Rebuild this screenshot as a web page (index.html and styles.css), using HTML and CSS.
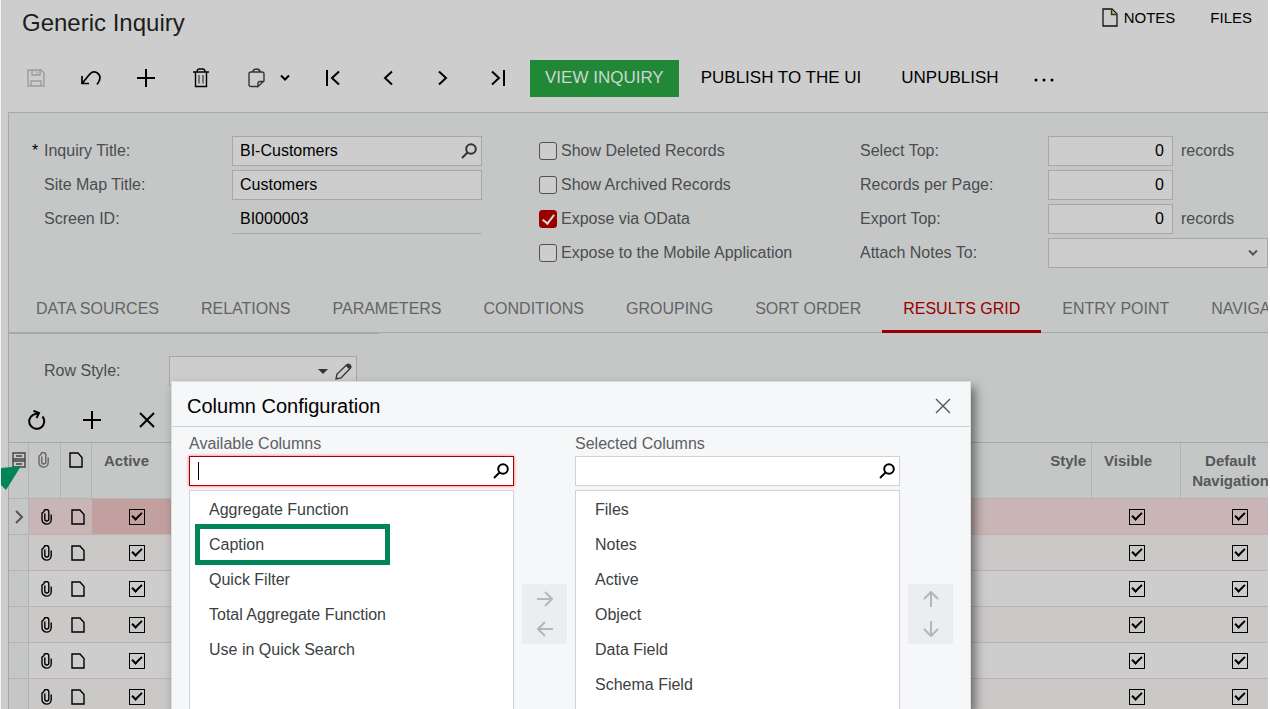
FILE: index.html
```html
<!DOCTYPE html>
<html lang="en">
  <head>
    <meta charset="utf-8" />
    <title>Generic Inquiry</title>
    <link rel="stylesheet" href="styles.css">
  </head>
  <body>
    <svg class="sprite" aria-hidden="true">
      <symbol id="search" viewBox="0 0 16 16"><circle cx="10" cy="6" r="4.8" /><path d="M6.5 9.5L1 15" /></symbol>
      <symbol id="plus" viewBox="0 0 20 20"><path d="M10 1v18M1 10h18" /></symbol>
      <symbol id="cross" viewBox="0 0 16 16"><path d="M1 1l14 14M15 1L1 15" /></symbol>
      <symbol id="down" viewBox="0 0 10 8"><path d="M1 1.5l4 4 4-4" /></symbol>
      <symbol id="arrow" viewBox="0 0 16 16"><path d="M0 8h15M8 1l7 7-7 7" /></symbol>
      <symbol id="clip" viewBox="0 0 12 16"><path d="M3.8 4.5V10a2 2 0 0 0 4 0V3.2a2.5 2.5 0 0 0-5-.5L1 4.200V10.500a4.600 4.600 0 0 0 9.200 0V5.500" /></symbol>
      <symbol id="note" viewBox="0 0 14 16"><path d="M1 1h8l4 4.500V15H1z" /></symbol>
    </svg>

    <header class="page-header">
      <h1>Generic Inquiry</h1>
      <nav class="header-links">
        <a href="#notes">
          <svg class="note-icon" width="16" height="19" viewBox="0 0 16 19"><path d="M1 1h9l5 5v12H1z" fill="none" stroke="#111" stroke-width="1.3" /><path d="M9.500 1.500v5h5" fill="#b9bd5a" stroke="#333" /></svg>
          NOTES
        </a>
        <a href="#files">FILES</a>
      </nav>
    </header>

    <div class="toolbar">
      <button class="icon-btn" aria-label="Save" disabled>
        <svg width="18" height="18" viewBox="0 0 18 18"><path d="M1 1h13l3 3v13H1zM5 1v5h8V1M4 17v-5h10v5M10 2.500v2" /></svg>
      </button>
      <button class="icon-btn" aria-label="Undo">
        <svg width="20" height="16" viewBox="0 0 20 16"><path d="M1 6v7.500h7M1.500 13L8 5Q12.500-.5 17 3.500t-1 11" stroke-width="1.7" /></svg>
      </button>
      <button class="icon-btn" aria-label="Add">
        <svg class="heavy" width="20" height="20"><use href="#plus" /></svg>
      </button>
      <button class="icon-btn" aria-label="Delete">
        <svg width="16" height="20" viewBox="0 0 16 20"><path d="M0 4h16M4 3.500q.5-2.500 2-2.500h4q1.500 0 2 2.500M2.500 4v14.500h11V4" /><path d="M6 7v8.500M10 7v8.500" stroke="#4a553c" /></svg>
      </button>
      <button class="icon-btn copy-btn" aria-label="Clipboard">
        <svg width="17" height="20" viewBox="0 0 17 20"><path d="M9.500 18.500H3q-2 0-2-2V6q0-2 2-2h11q2 0 2 2v7l-6 5.500v-3q0-2 2-2h4M4.500 4q1-3 4-3t4 3" stroke="#333" /></svg>
        <svg class="heavy" width="10" height="8"><use href="#down" /></svg>
      </button>
      <button class="icon-btn" aria-label="First">
        <svg class="heavy" width="16" height="16" viewBox="0 0 16 16"><path d="M2 0v16M14 1.500L7 8l7 6.500" /></svg>
      </button>
      <button class="icon-btn" aria-label="Previous">
        <svg class="heavy" width="16" height="16" viewBox="0 0 16 16"><path d="M12 1.500L5 8l7 6.500" /></svg>
      </button>
      <button class="icon-btn" aria-label="Next">
        <svg class="heavy" width="16" height="16" viewBox="0 0 16 16"><path d="M4 1.500L11 8l-7 6.500" /></svg>
      </button>
      <button class="icon-btn" aria-label="Last">
        <svg class="heavy" width="16" height="16" viewBox="0 0 16 16"><path d="M14 0v16M2 1.500L9 8l-7 6.500" /></svg>
      </button>
      <button class="text-btn view-btn">VIEW INQUIRY</button>
      <button class="text-btn">PUBLISH TO THE UI</button>
      <button class="text-btn">UNPUBLISH</button>
      <button class="more-btn" aria-label="More">
        <svg width="22" height="4" viewBox="0 0 22 4"><circle cx="3" cy="2" r="1.500" /><circle cx="11" cy="2" r="1.500" /><circle cx="19" cy="2" r="1.500" /></svg>
      </button>
    </div>

    <main class="panel">
      <form class="form">
        <div class="group main-group">
          <div class="row">
            <label class="required" for="title">Inquiry Title:</label>
            <div class="field">
              <input id="title" type="text" value="BI-Customers" />
              <button type="button" class="field-btn" aria-label="Find inquiry"><svg width="16" height="16"><use href="#search" /></svg></button>
            </div>
          </div>
          <div class="row">
            <label for="site-map">Site Map Title:</label>
            <div class="field"><input id="site-map" type="text" value="Customers" /></div>
          </div>
          <div class="row">
            <label for="screen-id">Screen ID:</label>
            <div class="field field-plain"><input id="screen-id" type="text" value="BI000003" readonly /></div>
          </div>
        </div>
        <div class="group check-group">
          <label class="row"><input type="checkbox" class="check" /> Show Deleted Records</label>
          <label class="row"><input type="checkbox" class="check" /> Show Archived Records</label>
          <label class="row"><input type="checkbox" class="check" checked /> Expose via OData</label>
          <label class="row"><input type="checkbox" class="check" /> Expose to the Mobile Application</label>
        </div>
        <div class="group limit-group">
          <div class="row">
            <label for="select-top">Select Top:</label>
            <div class="field number"><input id="select-top" type="text" value="0" /></div>
            <span class="unit">records</span>
          </div>
          <div class="row">
            <label for="per-page">Records per Page:</label>
            <div class="field number"><input id="per-page" type="text" value="0" /></div>
          </div>
          <div class="row">
            <label for="export-top">Export Top:</label>
            <div class="field number"><input id="export-top" type="text" value="0" /></div>
            <span class="unit">records</span>
          </div>
          <div class="row">
            <label for="attach">Attach Notes To:</label>
            <div class="field">
              <select id="attach"><option></option></select>
              <svg class="select-arrow" width="10" height="8"><use href="#down" /></svg>
            </div>
          </div>
        </div>
      </form>

      <nav class="tabs">
        <a href="#data-sources">DATA SOURCES</a>
        <a href="#relations">RELATIONS</a>
        <a href="#parameters">PARAMETERS</a>
        <a href="#conditions">CONDITIONS</a>
        <a href="#grouping">GROUPING</a>
        <a href="#sort-order">SORT ORDER</a>
        <a href="#results-grid" class="active">RESULTS GRID</a>
        <a href="#entry-point">ENTRY POINT</a>
        <a href="#navigation">NAVIGATION</a>
      </nav>

      <div class="row style-row">
        <label for="row-style">Row Style:</label>
        <div class="field">
          <select id="row-style"><option></option></select>
          <svg class="triangle" width="10" height="5" viewBox="0 0 10 5"><path d="M0 0h10L5 5z" /></svg>
          <button class="field-btn" aria-label="Edit row style">
            <svg class="pencil" width="17" height="17" viewBox="0 0 17 17"><path d="M1 16l1-5L12 1.500q1.500-1 3 .5t.5 3L6 15z" /><path d="M12 2l3 3" stroke-width="3" /></svg>
          </button>
        </div>
      </div>

      <div class="grid-toolbar">
        <button class="icon-btn" aria-label="Refresh">
          <svg class="heavy" width="18" height="20" viewBox="0 0 18 20"><path d="M14.500 6.500A7.500 7.500 0 1 1 5 4.800L10.500 3M5.500 .8L11 3L8.500 8" /></svg>
        </button>
        <button class="icon-btn" aria-label="Add row"><svg class="heavy" width="20" height="20"><use href="#plus" /></svg></button>
        <button class="icon-btn" aria-label="Delete row"><svg class="heavy" width="16" height="16"><use href="#cross" /></svg></button>
      </div>

      <table class="grid">
        <colgroup>
          <col class="col-select" />
          <col class="col-file" />
          <col class="col-note" />
          <col class="col-check" />
          <col />
          <col class="col-check" />
          <col class="col-nav" />
        </colgroup>
        <thead>
          <tr>
            <th class="select-cell">
              <button class="config-btn" aria-label="Column configuration">
                <svg width="14" height="16" viewBox="0 0 14 16"><path d="M1 1h12v6H1zM1 9h12v6H1zM4 4h6M4 12h6M1 1v14M13 1v14" /></svg>
              </button>
            </th>
            <th class="icon-cell"><svg class="clip" width="12" height="16"><use href="#clip" /></svg></th>
            <th class="icon-cell"><svg width="14" height="16"><use href="#note" /></svg></th>
            <th>Active</th>
            <th class="right">Style</th>
            <th>Visible</th>
            <th class="nav-cell">Default Navigation</th>
          </tr>
        </thead>
        <tbody>
          <tr class="selected">
            <td class="select-cell"><svg class="marker" width="10" height="14" viewBox="0 0 10 14"><path d="M2 1l6 6-6 6" /></svg></td>
            <td><svg width="12" height="16"><use href="#clip" /></svg></td>
            <td><svg width="14" height="16"><use href="#note" /></svg></td>
            <td class="current"><input type="checkbox" class="grid-check" aria-label="Active" checked /></td>
            <td></td>
            <td><input type="checkbox" class="grid-check" aria-label="Visible" checked /></td>
            <td><input type="checkbox" class="grid-check" aria-label="Default navigation" checked /></td>
          </tr>
          <tr>
            <td class="select-cell"></td>
            <td><svg width="12" height="16"><use href="#clip" /></svg></td>
            <td><svg width="14" height="16"><use href="#note" /></svg></td>
            <td><input type="checkbox" class="grid-check" aria-label="Active" checked /></td>
            <td></td>
            <td><input type="checkbox" class="grid-check" aria-label="Visible" checked /></td>
            <td><input type="checkbox" class="grid-check" aria-label="Default navigation" checked /></td>
          </tr>
          <tr>
            <td class="select-cell"></td>
            <td><svg width="12" height="16"><use href="#clip" /></svg></td>
            <td><svg width="14" height="16"><use href="#note" /></svg></td>
            <td><input type="checkbox" class="grid-check" aria-label="Active" checked /></td>
            <td></td>
            <td><input type="checkbox" class="grid-check" aria-label="Visible" checked /></td>
            <td><input type="checkbox" class="grid-check" aria-label="Default navigation" checked /></td>
          </tr>
          <tr>
            <td class="select-cell"></td>
            <td><svg width="12" height="16"><use href="#clip" /></svg></td>
            <td><svg width="14" height="16"><use href="#note" /></svg></td>
            <td><input type="checkbox" class="grid-check" aria-label="Active" checked /></td>
            <td></td>
            <td><input type="checkbox" class="grid-check" aria-label="Visible" checked /></td>
            <td><input type="checkbox" class="grid-check" aria-label="Default navigation" checked /></td>
          </tr>
          <tr>
            <td class="select-cell"></td>
            <td><svg width="12" height="16"><use href="#clip" /></svg></td>
            <td><svg width="14" height="16"><use href="#note" /></svg></td>
            <td><input type="checkbox" class="grid-check" aria-label="Active" checked /></td>
            <td></td>
            <td><input type="checkbox" class="grid-check" aria-label="Visible" checked /></td>
            <td><input type="checkbox" class="grid-check" aria-label="Default navigation" checked /></td>
          </tr>
          <tr>
            <td class="select-cell"></td>
            <td><svg width="12" height="16"><use href="#clip" /></svg></td>
            <td><svg width="14" height="16"><use href="#note" /></svg></td>
            <td><input type="checkbox" class="grid-check" aria-label="Active" checked /></td>
            <td></td>
            <td><input type="checkbox" class="grid-check" aria-label="Visible" checked /></td>
            <td><input type="checkbox" class="grid-check" aria-label="Default navigation" checked /></td>
          </tr>
        </tbody>
      </table>
    </main>

    <svg class="pointer" width="22" height="24" viewBox="0 0 22 24" aria-hidden="true"><path d="M0 2L21 0 6 24 0 18z" /></svg>

    <div class="dialog" role="dialog" aria-labelledby="dialog-title">
      <div class="dialog-header">
        <h2 id="dialog-title">Column Configuration</h2>
        <button class="close-btn" aria-label="Close"><svg width="16" height="16"><use href="#cross" /></svg></button>
      </div>
      <div class="dialog-body">
        <div class="columns">
          <label for="available">Available Columns</label>
          <div class="field focused">
            <span class="caret"></span>
            <input id="available" type="text" />
            <button class="field-btn" aria-label="Search available"><svg class="heavy" width="16" height="16"><use href="#search" /></svg></button>
          </div>
          <ul class="list">
            <li>Aggregate Function</li>
            <li class="highlight">Caption</li>
            <li>Quick Filter</li>
            <li>Total Aggregate Function</li>
            <li>Use in Quick Search</li>
          </ul>
        </div>
        <div class="move-btns">
          <button aria-label="Add column"><svg width="16" height="16"><use href="#arrow" /></svg></button>
          <button aria-label="Remove column"><svg class="left" width="16" height="16"><use href="#arrow" /></svg></button>
        </div>
        <div class="columns">
          <label for="selected">Selected Columns</label>
          <div class="field">
            <input id="selected" type="text" />
            <button class="field-btn" aria-label="Search selected"><svg class="heavy" width="16" height="16"><use href="#search" /></svg></button>
          </div>
          <ul class="list">
            <li>Files</li>
            <li>Notes</li>
            <li>Active</li>
            <li>Object</li>
            <li>Data Field</li>
            <li>Schema Field</li>
          </ul>
        </div>
        <div class="move-btns">
          <button aria-label="Move up"><svg class="up" width="16" height="16"><use href="#arrow" /></svg></button>
          <button aria-label="Move down"><svg class="down" width="16" height="16"><use href="#arrow" /></svg></button>
        </div>
      </div>
    </div>
  </body>
</html>
```
FILE: styles.css
```css
*,
*::before,
*::after {
  box-sizing: border-box;
}
body {
  margin: 0;
  height: 100vh;
  overflow: hidden;
  position: relative;
  border-left: 1px solid #f4f4f4;
  border-right: 2px solid #fff;
  background-color: #cdcdcd;
  color: #4a4d50;
  font-family: "Liberation Sans", Arial, sans-serif;
  font-size: 16px;
}
button,
input,
select {
  font: inherit;
  color: #000;
  background: none;
  border: none;
  border-radius: 0;
  margin: 0;
  padding: 0;
  outline: none;
}
a {
  text-decoration: none;
}
svg {
  display: block;
  flex: none;
  fill: none;
  stroke: #000;
  stroke-width: 1.4;
}
svg.heavy {
  stroke-width: 2;
}
.sprite {
  position: absolute;
  width: 0;
  height: 0;
}

/* header */
.page-header {
  display: flex;
  justify-content: space-between;
  height: 46px;
  padding: 0 16px 0 21px;
}
h1 {
  margin: 0;
  font-size: 24px;
  line-height: 46px;
  font-weight: normal;
  color: #1c1c1c;
}
.header-links {
  display: flex;
  gap: 35px;
  height: 35px;
}
.header-links a {
  display: flex;
  align-items: center;
  gap: 6px;
  font-size: 15px;
  color: #000;
}

/* toolbar */
.toolbar {
  display: flex;
  align-items: center;
  height: 66px;
  padding: 0 0 2px 7px;
}
.icon-btn {
  display: flex;
  align-items: center;
  justify-content: center;
  width: 55px;
  height: 37px;
}
.icon-btn:disabled svg {
  stroke: #9b9b9b;
}
.copy-btn {
  width: 77px;
  gap: 15px;
  padding-left: 4px;
}
.text-btn {
  height: 37px;
  padding: 0 20px;
  font-size: 17px;
}
.view-btn {
  margin: 0 2px 0 5px;
  padding: 0 15px;
  background-color: #218838;
  color: #cfd6cf;
}
.more-btn {
  padding: 4px 14px 0;
}
.more-btn svg {
  fill: #000;
  stroke: none;
}

/* form */
.panel {
  margin-left: 7px;
  border-top: 1px solid #a6a8a7;
  border-left: 1px solid #a6a8a7;
  background-color: #c5c7c6;
}
.form {
  display: flex;
  padding: 23px 0 0 23px;
}
.group {
  display: flex;
  flex-direction: column;
  gap: 4px;
}
.main-group {
  width: 450px;
  margin-right: 57px;
}
.check-group {
  width: 321px;
}
.limit-group {
  flex: 1;
}
.row {
  display: flex;
  align-items: center;
  height: 30px;
}
.main-group label {
  width: 200px;
  padding-left: 12px;
}
.main-group .required {
  padding-left: 0;
}
.required::before {
  content: "*";
  display: inline-block;
  width: 12px;
  color: #000;
}
.limit-group label {
  width: 188px;
}
.field {
  display: flex;
  align-items: center;
  flex: 1;
  position: relative;
  height: 30px;
  padding: 0 4px 0 7px;
  border: 1px solid #a6a8a7;
  background-color: #cdcdcd;
}
.field input,
.field select {
  flex: 1;
  min-width: 0;
  height: 28px;
}
.field select {
  appearance: none;
}
.field svg {
  stroke: #333;
  stroke-width: 2;
}
.field-plain {
  border-color: transparent;
  border-bottom-color: #a6a8a7;
  background: none;
}
.field .select-arrow {
  margin-right: 5px;
  stroke: #555;
}
.number {
  flex: none;
  width: 125px;
  padding: 0 8px;
}
.number input {
  text-align: right;
}
.unit {
  margin-left: 8px;
}
.check-group .row {
  gap: 4px;
}
.check {
  appearance: none;
  display: grid;
  place-items: center;
  width: 18px;
  height: 18px;
  border: 1px solid #4f5254;
  border-radius: 3px;
  background-color: #cdcdcd;
}
.check:checked {
  border-color: #980000;
  background-color: #980000;
}
.check:checked::after {
  content: "";
  width: 7px;
  height: 12px;
  margin-bottom: 2px;
  border: solid #e6d4d4;
  border-width: 0 2px 2px 0;
  transform: rotate(38deg);
}

/* tabs */
.tabs {
  display: flex;
  height: 65px;
  padding: 17px 0 0 6px;
  overflow: hidden;
  box-shadow: inset 0 -1px #a6a8a7;
}
.tabs a {
  padding: 0 21px;
  line-height: 48px;
  white-space: nowrap;
  color: #626567;
}
.tabs .active {
  color: #980000;
  border-bottom: 3px solid #980000;
}
.style-row {
  height: 68px;
  padding: 8px 0 0 35px;
  background: linear-gradient(#a6a8a7, #a6a8a7) no-repeat;
  background-size: 370px 1px;
}
.style-row label {
  width: 125px;
}
.style-row .field {
  flex: none;
  width: 188px;
}
.style-row .triangle {
  margin-right: 7px;
  fill: #333;
  stroke: none;
}
.field .pencil {
  stroke-width: 1.3;
}
.grid-toolbar {
  display: flex;
  align-items: center;
  height: 41px;
  padding-bottom: 3px;
}

/* results grid */
.grid {
  width: calc(100% + 30px);
  table-layout: fixed;
  border-collapse: separate;
  border-spacing: 0;
  border-top: 1px solid #a6a8a7;
}
.col-select {
  width: 20px;
}
.col-file {
  width: 32px;
}
.col-note {
  width: 31px;
}
.col-check {
  width: 89px;
}
.col-nav {
  width: 117px;
}
.grid th {
  height: 56px;
  padding: 8px 5px 0 12px;
  border-right: 1px solid #b2b4b3;
  border-bottom: 1px solid #b2b4b3;
  vertical-align: top;
  text-align: left;
  font-size: 15px;
  line-height: 20px;
  color: #55585a;
}
.grid .right {
  text-align: right;
}
.grid .icon-cell {
  padding: 9px 8px 0;
}
.grid .nav-cell {
  padding-right: 17px;
  padding-left: 0;
  text-align: center;
}
.clip {
  margin-left: 1px;
}
.grid .clip {
  stroke: #666;
}
.grid td {
  height: 36px;
  padding: 0;
  border-bottom: 1px solid #c2b0b1;
  background-color: #cdcdcd;
}
.grid tr:nth-child(even) td {
  background-color: #cbc8c8;
}
.grid .selected td {
  background-color: #c9b5b6;
}
.grid .selected .current {
  background-color: #c2a0a0;
}
.grid tbody .select-cell.select-cell {
  border-right: 1px solid #b2b4b3;
  border-bottom-color: #b2b4b3;
  background-color: #c5c7c6;
}
.grid td svg,
.grid-check {
  margin: 0 auto;
}
.grid td:nth-child(2) {
  padding-left: 4px;
}
.grid td:nth-child(3) {
  padding-left: 3px;
}
.grid .select-cell {
  padding: 0;
}
.grid .marker {
  stroke: #555;
  stroke-width: 2;
}
.config-btn {
  display: block;
  margin: 9px auto 0 3px;
}
.config-btn svg {
  stroke: #444;
}
.grid-check {
  appearance: none;
  display: grid;
  place-items: center;
  width: 16px;
  height: 16px;
  border: 1px solid #000;
}
.grid-check:checked::after {
  content: "";
  width: 10px;
  height: 6px;
  margin-bottom: 3px;
  border: solid #000;
  border-width: 0 0 2px 2px;
  transform: rotate(-45deg);
}

/* green callout that points at the configuration button */
.pointer {
  position: absolute;
  top: 466px;
  left: -1px;
  fill: #00845a;
  stroke: none;
}

/* dialog */
.dialog {
  position: absolute;
  top: 381px;
  bottom: 0;
  left: 170px;
  width: 800px;
  display: flex;
  flex-direction: column;
  border: 1px solid #dcdee0;
  border-bottom: none;
  background-color: #f5f7f9;
  box-shadow: 4px 6px 10px rgba(0, 0, 0, 0.5);
}
.dialog-header {
  display: flex;
  align-items: center;
  justify-content: space-between;
  height: 45px;
  padding: 4px 19px 0 15px;
  border-bottom: 1px solid #cfd1d4;
}
h2 {
  margin: 0;
  font-size: 20px;
  font-weight: normal;
  color: #000;
}
.close-btn svg {
  stroke: #555;
}
.dialog-body {
  display: flex;
  flex: 1;
  gap: 8px;
  padding: 9px 17px 0;
}
.columns {
  display: flex;
  flex-direction: column;
  flex: 1;
  gap: 4px;
}
.columns label {
  line-height: 16px;
  color: #5c6063;
}
.dialog .field {
  flex: none;
  border-color: #cfd1d4;
  background-color: #fff;
}
.dialog .field svg {
  stroke: #000;
}
.dialog .focused {
  border-color: #a80000;
  box-shadow: 0 0 3px #ff5a5a;
}
.caret {
  width: 1px;
  height: 18px;
  margin-left: 1px;
  background-color: #000;
}
.list {
  flex: 1;
  margin: 0;
  padding: 1px 0 0;
  list-style: none;
  border: 1px solid #cfd1d4;
  border-bottom: none;
  background-color: #fff;
  color: #3c3f42;
}
.list li {
  position: relative;
  padding-left: 19px;
  line-height: 35px;
}
.highlight::after {
  content: "";
  position: absolute;
  top: -3px;
  left: 5px;
  width: 195px;
  height: 41px;
  border: 5px solid #00845a;
}
.move-btns {
  display: flex;
  flex-direction: column;
  width: 45px;
  height: 60px;
  margin-top: 148px;
  background-color: #ecedef;
}
.move-btns button {
  display: flex;
  flex: 1;
  align-items: center;
  justify-content: center;
}
.move-btns svg {
  stroke: #b4b6b8;
  stroke-width: 2;
}
.move-btns .left {
  transform: rotate(180deg);
}
.move-btns .up {
  transform: rotate(-90deg);
}
.move-btns .down {
  transform: rotate(90deg);
}
```
